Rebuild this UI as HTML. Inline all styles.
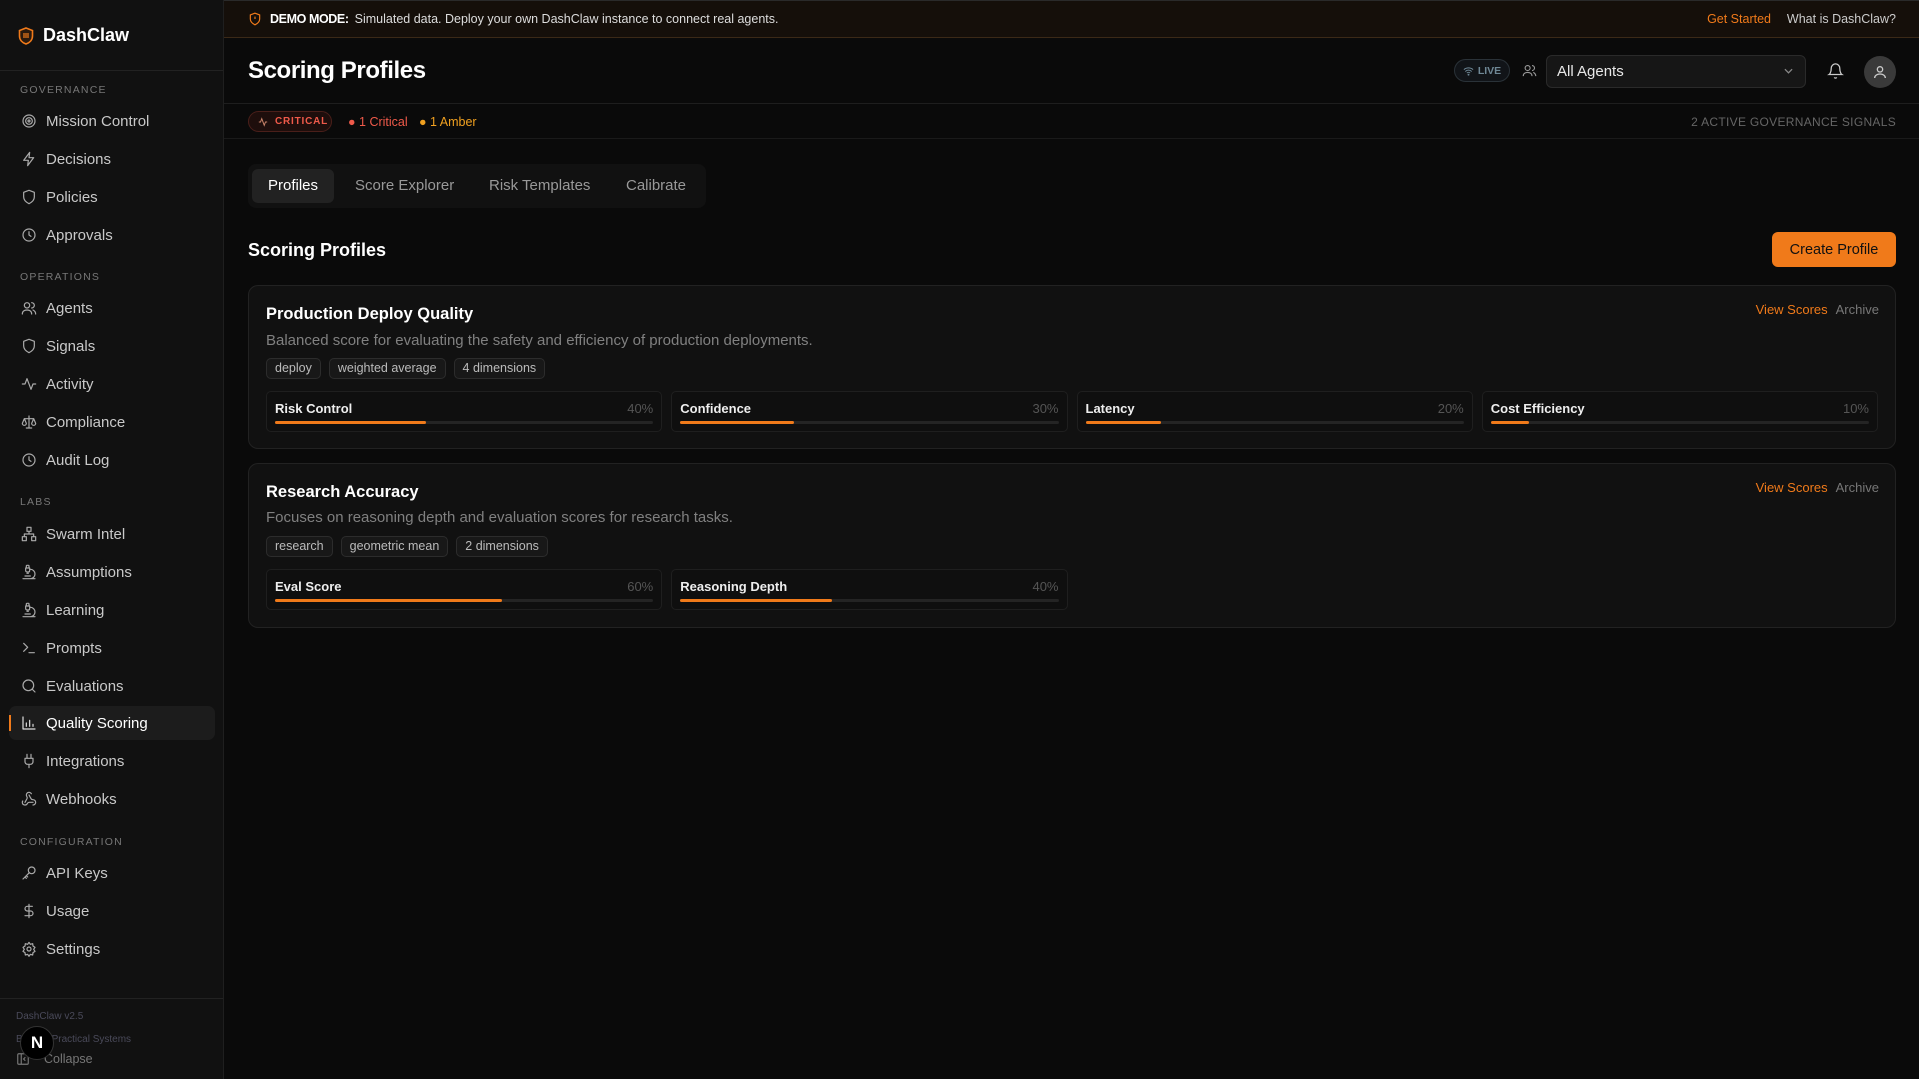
<!DOCTYPE html>
<html><head><meta charset="utf-8"><style>
*{box-sizing:border-box;margin:0;padding:0}
body{width:1919px;height:1079px;background:#0a0a0a;font-family:"Liberation Sans",sans-serif;color:#e5e5e5;position:relative;overflow:hidden}
.sb{position:absolute;left:0;top:0;width:224px;height:1079px;background:#111;border-right:1px solid #1f1f1f}
.logo{position:absolute;left:18px;top:25px;display:flex;align-items:center;gap:9px;font-size:18px;font-weight:bold;color:#fff}
.sbline{position:absolute;left:0;width:223px;height:1px;background:#222}
.sec{position:absolute;left:20px;font-size:10.5px;letter-spacing:1.2px;color:#777}
.it{position:absolute;left:9px;width:206px;height:34px;display:flex;align-items:center;font-size:15px;color:#c9c9c9;border-radius:7px}
.it svg{position:absolute;left:12px;width:16px;height:16px;fill:none;stroke:#aaa;stroke-width:1.8;stroke-linecap:round;stroke-linejoin:round}
.it span{position:absolute;left:37px}
.it.act{background:#1c1c1c;color:#fff}
.it.act::before{content:"";position:absolute;left:0;top:9px;width:2px;height:16px;background:#f07a1a}
.banner{position:absolute;left:224px;top:0;right:0;height:38px;background:#150f0a;border-bottom:1px solid #3b2917;border-top:1px solid #2a2a2a;font-size:12.5px;color:#ddd;display:flex;align-items:center}
.hdr{position:absolute;left:224px;right:0;top:38px;height:66px;border-bottom:1px solid #1e1e1e}
h1{position:absolute;left:24px;top:19px;font-size:24px;font-weight:bold;color:#fff;letter-spacing:-0.4px}
.sig{position:absolute;left:224px;right:0;top:104px;height:35px;border-bottom:1px solid #1a1a1a;font-size:12.5px}
.tabs{position:absolute;left:248px;top:164px;width:458px;height:44px;background:#111;border-radius:8px}
.tab{position:absolute;top:5px;height:34px;line-height:34px;font-size:15px;color:#999}
.card{position:absolute;left:248px;width:1648px;background:#111;border:1px solid #222;border-radius:10px}
.ct{position:absolute;left:17px;font-size:16.5px;font-weight:bold;color:#fff}
.cd{position:absolute;left:17px;font-size:15px;color:#808080}
.tags{position:absolute;left:17px;display:flex;gap:8px}
.tag{height:21px;line-height:19px;padding:0 8px;border:1px solid #2c2c2c;background:#181818;border-radius:5px;font-size:12.5px;color:#bbb}
.acts{position:absolute;right:16px;font-size:13px}
.dims{position:absolute;left:17px;right:17px;display:grid;grid-template-columns:repeat(4,1fr);gap:9px}
.dim{height:41px;border:1px solid #1f1f1f;background:#0f0f0f;border-radius:5px;position:relative}
.dim b{position:absolute;left:8px;top:9px;font-size:13px;color:#eee;font-weight:bold}
.dim i{position:absolute;right:8px;top:9px;font-size:13px;color:#555;font-style:normal}
.bar{position:absolute;left:8px;right:8px;top:29px;height:3px;background:#242424;border-radius:2px}
.bar div{height:3px;background:#f07a1a;border-radius:2px}
</style></head><body>
<div class="sb">
 <div class="logo"><svg width="16" height="18" viewBox="0 0 16 18"><path d="M8 1 L14.5 3.5 V9 C14.5 13 11.5 15.8 8 17 C4.5 15.8 1.5 13 1.5 9 V3.5 Z" fill="#2a1a0e" stroke="#f07a1a" stroke-width="1.6"/><path d="M6 6v5M8 6v5M10 6v5" stroke="#f07a1a" stroke-width="1.2"/></svg>DashClaw</div>
 <div class="sbline" style="top:70px"></div>
 <div class="sec" style="top:84px">GOVERNANCE</div>
 <div class="it" style="top:104px"><svg viewBox="0 0 24 24"><circle cx="12" cy="12" r="9"/><circle cx="12" cy="12" r="5"/><circle cx="12" cy="12" r="1.5"/></svg><span>Mission Control</span></div>
 <div class="it" style="top:142px"><svg viewBox="0 0 24 24"><path d="M13 2 4 14h7l-1 8 9-12h-7z"/></svg><span>Decisions</span></div>
 <div class="it" style="top:180px"><svg viewBox="0 0 24 24"><path d="M12 2 20 5v7c0 5-4 8-8 10-4-2-8-5-8-10V5z"/></svg><span>Policies</span></div>
 <div class="it" style="top:218px"><svg viewBox="0 0 24 24"><circle cx="12" cy="12" r="9"/><path d="M12 7v5l3 2"/></svg><span>Approvals</span></div>
 <div class="sec" style="top:271px">OPERATIONS</div>
 <div class="it" style="top:291px"><svg viewBox="0 0 24 24"><circle cx="9" cy="8" r="4"/><path d="M2 21c0-4 3-6 7-6s7 2 7 6M16 4a4 4 0 0 1 0 8M22 21c0-3-2-5-4-6"/></svg><span>Agents</span></div>
 <div class="it" style="top:329px"><svg viewBox="0 0 24 24"><path d="M12 2 20 5v7c0 5-4 8-8 10-4-2-8-5-8-10V5z"/></svg><span>Signals</span></div>
 <div class="it" style="top:367px"><svg viewBox="0 0 24 24"><path d="M2 12h4l3-8 6 16 3-8h4"/></svg><span>Activity</span></div>
 <div class="it" style="top:405px"><svg viewBox="0 0 24 24"><path d="M12 3v18M5 7h14M5 7l-3 7a3 3 0 0 0 6 0zM19 7l-3 7a3 3 0 0 0 6 0zM8 21h8"/></svg><span>Compliance</span></div>
 <div class="it" style="top:443px"><svg viewBox="0 0 24 24"><circle cx="12" cy="12" r="9"/><path d="M12 7v5l3 2"/></svg><span>Audit Log</span></div>
 <div class="sec" style="top:496px">LABS</div>
 <div class="it" style="top:517px"><svg viewBox="0 0 24 24"><rect x="9" y="2" width="6" height="6"/><rect x="2" y="16" width="6" height="6"/><rect x="16" y="16" width="6" height="6"/><path d="M5 16v-4h14v4M12 8v4"/></svg><span>Swarm Intel</span></div>
 <div class="it" style="top:555px"><svg viewBox="0 0 24 24"><path d="M6 18h8M3 22h18M14 22a7 7 0 1 0 0-14M9 14h2M9 12a2 2 0 0 1-2-2V6h6v4a2 2 0 0 1-2 2zM12 6V3a1 1 0 0 0-1-1H9a1 1 0 0 0-1 1v3"/></svg><span>Assumptions</span></div>
 <div class="it" style="top:593px"><svg viewBox="0 0 24 24"><path d="M6 18h8M3 22h18M14 22a7 7 0 1 0 0-14M9 14h2M9 12a2 2 0 0 1-2-2V6h6v4a2 2 0 0 1-2 2zM12 6V3a1 1 0 0 0-1-1H9a1 1 0 0 0-1 1v3"/></svg><span>Learning</span></div>
 <div class="it" style="top:631px"><svg viewBox="0 0 24 24"><path d="M4 17l6-6-6-6M12 19h8"/></svg><span>Prompts</span></div>
 <div class="it" style="top:669px"><svg viewBox="0 0 24 24"><circle cx="11" cy="11" r="8"/><path d="M21 21l-4.3-4.3"/></svg><span>Evaluations</span></div>
 <div class="it act" style="top:706px"><svg viewBox="0 0 24 24" style="stroke:#ddd"><path d="M3 3v18h18M8 17v-5M13 17V8M18 17v-3"/></svg><span>Quality Scoring</span></div>
 <div class="it" style="top:744px"><svg viewBox="0 0 24 24"><path d="M12 22v-5M9 8V2M15 8V2M18 8v5a4 4 0 0 1-4 4h-4a4 4 0 0 1-4-4V8z"/></svg><span>Integrations</span></div>
 <div class="it" style="top:782px"><svg viewBox="0 0 24 24"><path d="M18 16.98h-5.99c-1.1 0-1.95.94-2.48 1.9A4 4 0 0 1 2 17c.01-.7.2-1.4.57-2M6 17l3.13-5.78c.53-.97.1-2.18-.5-3.1a4 4 0 1 1 6.890-4.06M12 6l3.13 5.73C15.66 12.7 16.9 13 18 13a4 4 0 0 1 0 8"/></svg><span>Webhooks</span></div>
 <div class="sec" style="top:836px">CONFIGURATION</div>
 <div class="it" style="top:856px"><svg viewBox="0 0 24 24"><circle cx="16" cy="8" r="5"/><path d="M12.5 11.5 3 21M6 18l2 2M8 16l2 2"/></svg><span>API Keys</span></div>
 <div class="it" style="top:894px"><svg viewBox="0 0 24 24"><path d="M12 2v20M17 5H9.5a3.5 3.5 0 0 0 0 7h5a3.5 3.5 0 0 1 0 7H6"/></svg><span>Usage</span></div>
 <div class="it" style="top:932px"><svg viewBox="0 0 24 24"><circle cx="12" cy="12" r="3"/><path d="M12 2l2 3 3.5-1 .5 3.5 3 2-2 3 2 3-3 2-.5 3.5-3.5-1-2 3-2-3-3.5 1L6 17.5l-3-2 2-3-2-3 3-2L6.5 4 10 5z"/></svg><span>Settings</span></div>
 <div class="sbline" style="top:998px"></div>
 <div style="position:absolute;left:16px;top:1011px;font-size:10px;color:#4a4a5a">DashClaw v2.5</div>
 <div style="position:absolute;left:16px;top:1034px;font-size:10px;color:#4a4a5a">Built by Practical Systems</div>
 <div style="position:absolute;left:16px;top:1052px;font-size:12.5px;color:#777;display:flex;gap:8px;align-items:center"><svg width="14" height="14" viewBox="0 0 24 24" fill="none" stroke="#777" stroke-width="2"><rect x="3" y="3" width="18" height="18" rx="2"/><path d="M9 3v18M16 9l-3 3 3 3"/></svg><span style="margin-left:6px">Collapse</span></div>
 <div style="position:absolute;left:20px;top:1026px;width:34px;height:34px;border-radius:50%;background:#000;border:1px solid #333;color:#fff;font-size:17px;font-weight:bold;text-align:center;line-height:32px">N</div>
</div>

<div class="banner">
 <svg style="margin-left:24px" width="14" height="14" viewBox="0 0 24 24" fill="none" stroke="#f07a1a" stroke-width="2"><path d="M12 2 20 5v7c0 5-4 8-8 10-4-2-8-5-8-10V5z"/><path d="M12 8v4M12 16h.01"/></svg>
 <b style="margin-left:8px;color:#fff;letter-spacing:-0.4px">DEMO MODE:</b><span style="margin-left:6px">Simulated data. Deploy your own DashClaw instance to connect real agents.</span>
 <span style="position:absolute;right:148px;color:#f07a1a">Get Started</span>
 <span style="position:absolute;right:23px;color:#ccc">What is DashClaw?</span>
</div>

<div class="hdr">
 <h1>Scoring Profiles</h1>
 <div style="position:absolute;left:1230px;top:21px;width:56px;height:23px;border:1px solid #2a3238;border-radius:12px;background:#111418;font-size:10.5px;color:#6f8896;font-weight:bold;display:flex;align-items:center;justify-content:center;gap:4px"><svg width="11" height="10" viewBox="0 0 24 20" fill="none" stroke="#6f8896" stroke-width="2.2"><path d="M2 7a15 15 0 0 1 20 0M5 11a10 10 0 0 1 14 0M8.5 14.5a5 5 0 0 1 7 0"/><circle cx="12" cy="18" r="1"/></svg>LIVE</div>
 <svg style="position:absolute;left:1298px;top:25px" width="15" height="15" viewBox="0 0 24 24" fill="none" stroke="#999" stroke-width="1.8"><circle cx="9" cy="8" r="4"/><path d="M2 21c0-4 3-6 7-6s7 2 7 6M16 4a4 4 0 0 1 0 8M22 21c0-3-2-5-4-6"/></svg>
 <div style="position:absolute;left:1322px;top:17px;width:260px;height:33px;border:1px solid #2a2a2a;background:#161616;border-radius:6px;font-size:15px;color:#e8e8e8;line-height:31px;padding-left:10px">All Agents<svg style="position:absolute;right:12px;top:12px" width="9" height="6" viewBox="0 0 10 6" fill="none" stroke="#888" stroke-width="1.4"><path d="M1 1l4 4 4-4"/></svg></div>
 <svg style="position:absolute;left:1603px;top:24px" width="17" height="18" viewBox="0 0 24 24" fill="none" stroke="#ccc" stroke-width="1.8"><path d="M6 8a6 6 0 0 1 12 0c0 7 3 9 3 9H3s3-2 3-9M10.3 21a1.9 1.9 0 0 0 3.4 0"/></svg>
 <div style="position:absolute;left:1640px;top:18px;width:32px;height:32px;border-radius:50%;background:#3a3a3a"><svg style="margin:8px" width="16" height="16" viewBox="0 0 24 24" fill="none" stroke="#ccc" stroke-width="2"><circle cx="12" cy="8" r="4"/><path d="M4 21c0-4 4-6 8-6s8 2 8 6"/></svg></div>
</div>

<div class="sig">
 <div style="position:absolute;left:24px;top:7px;width:84px;height:21px;border:1px solid #4a1f1a;background:#1e0e0c;border-radius:11px;font-size:10px;font-weight:bold;letter-spacing:0.8px;color:#ef5a4a;line-height:19px;padding-left:26px"><svg style="position:absolute;left:9px;top:5px" width="10" height="10" viewBox="0 0 24 24" fill="none" stroke="#c9846a" stroke-width="2.4"><path d="M2 12h4l3-8 6 16 3-8h4"/></svg>CRITICAL</div>
 <span style="position:absolute;left:124px;top:11px;color:#ef5a4a">● 1 Critical</span>
 <span style="position:absolute;left:195px;top:11px;color:#f0a020">● 1 Amber</span>
 <span style="position:absolute;right:23px;top:11px;color:#666;font-size:12px;letter-spacing:0.3px">2 ACTIVE GOVERNANCE SIGNALS</span>
</div>

<div class="tabs">
 <div class="tab" style="left:4px;width:82px;background:#222;border-radius:6px;color:#fff;text-align:center">Profiles</div>
 <div class="tab" style="left:107px">Score Explorer</div>
 <div class="tab" style="left:241px">Risk Templates</div>
 <div class="tab" style="left:378px">Calibrate</div>
</div>

<div style="position:absolute;left:248px;top:240px;font-size:18px;font-weight:bold;color:#fff">Scoring Profiles</div>
<div style="position:absolute;left:1772px;top:232px;width:124px;height:35px;background:#f07a1a;border-radius:6px;color:#111;font-size:14.5px;text-align:center;line-height:37px">Create Profile</div>

<div class="card" style="top:285px;height:164px">
 <div class="ct" style="top:19px">Production Deploy Quality</div>
 <div class="acts" style="top:16px"><span style="color:#f07a1a">View Scores</span><span style="color:#777;margin-left:8px">Archive</span></div>
 <div class="cd" style="top:46px">Balanced score for evaluating the safety and efficiency of production deployments.</div>
 <div class="tags" style="top:72px"><div class="tag">deploy</div><div class="tag">weighted average</div><div class="tag">4 dimensions</div></div>
 <div class="dims" style="top:105px">
  <div class="dim"><b>Risk Control</b><i>40%</i><div class="bar"><div style="width:40%"></div></div></div>
  <div class="dim"><b>Confidence</b><i>30%</i><div class="bar"><div style="width:30%"></div></div></div>
  <div class="dim"><b>Latency</b><i>20%</i><div class="bar"><div style="width:20%"></div></div></div>
  <div class="dim"><b>Cost Efficiency</b><i>10%</i><div class="bar"><div style="width:10%"></div></div></div>
 </div>
</div>

<div class="card" style="top:463px;height:165px">
 <div class="ct" style="top:19px">Research Accuracy</div>
 <div class="acts" style="top:16px"><span style="color:#f07a1a">View Scores</span><span style="color:#777;margin-left:8px">Archive</span></div>
 <div class="cd" style="top:45px">Focuses on reasoning depth and evaluation scores for research tasks.</div>
 <div class="tags" style="top:72px"><div class="tag">research</div><div class="tag">geometric mean</div><div class="tag">2 dimensions</div></div>
 <div class="dims" style="top:105px">
  <div class="dim"><b>Eval Score</b><i>60%</i><div class="bar"><div style="width:60%"></div></div></div>
  <div class="dim"><b>Reasoning Depth</b><i>40%</i><div class="bar"><div style="width:40%"></div></div></div>
 </div>
</div>
</body></html>
